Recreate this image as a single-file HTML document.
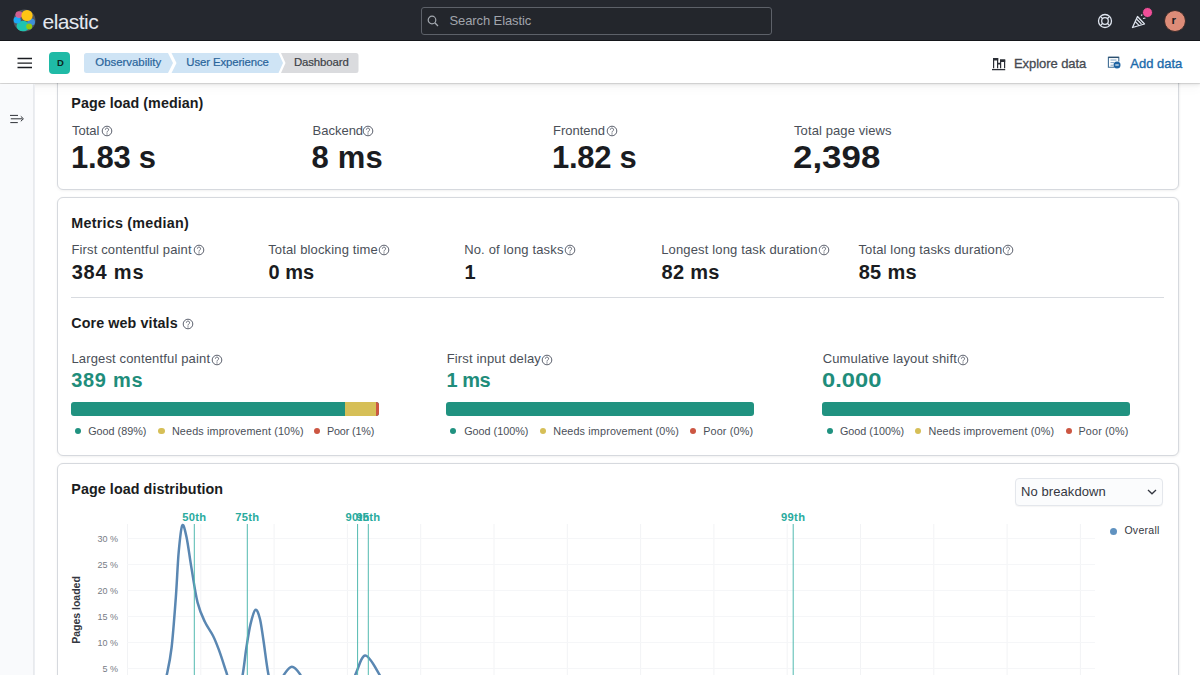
<!DOCTYPE html>
<html><head><meta charset="utf-8">
<style>
*{box-sizing:border-box;margin:0;padding:0}
html,body{width:1200px;height:675px;overflow:hidden;background:#fff;font-family:"Liberation Sans",sans-serif;color:#343741}
.a{position:absolute;white-space:nowrap;line-height:1}
</style></head><body>

<div class="a" style="left:57px;top:30px;width:1122px;height:160px;border:1px solid #d6d9de;border-radius:6px;background:#fff;box-shadow:0 1px 3px rgba(0,0,0,.05),1px 0 2px rgba(0,0,0,.03)"></div>
<div class="a" style="left:57px;top:197px;width:1122px;height:259px;border:1px solid #d6d9de;border-radius:6px;background:#fff;box-shadow:0 1px 3px rgba(0,0,0,.05),1px 0 2px rgba(0,0,0,.03)"></div>
<div class="a" style="left:57px;top:463px;width:1122px;height:300px;border:1px solid #d6d9de;border-radius:6px;background:#fff;box-shadow:0 1px 3px rgba(0,0,0,.05),1px 0 2px rgba(0,0,0,.03)"></div>
<div class="a" style="left:71.3px;top:96.30px;font-size:14.3px;font-weight:700;color:#1a1c21;letter-spacing:0.05px">Page load (median)</div>
<div class="a" style="left:72px;top:124.10px;font-size:13px;font-weight:400;color:#4a4f58">Total</div>
<div class="a" style="left:71.1px;top:141.56px;font-size:31px;font-weight:700;color:#1a1c21;letter-spacing:-0.25px">1.83 s</div>
<svg class="a" style="left:101.1px;top:125.4px" width="12" height="12" viewBox="0 0 12 12"><circle cx="6" cy="6" r="4.8" fill="none" stroke="#535966" stroke-width="0.95"/><path d="M4.4 4.7a1.6 1.6 0 1 1 2.3 1.4c-.5.3-.7.6-.7 1.1v.4" fill="none" stroke="#535966" stroke-width="0.85"/><circle cx="6" cy="8.9" r=".55" fill="#535966"/></svg>
<div class="a" style="left:312.5px;top:124.10px;font-size:13px;font-weight:400;color:#4a4f58">Backend</div>
<div class="a" style="left:311.6px;top:141.56px;font-size:31px;font-weight:700;color:#1a1c21;letter-spacing:0.2px">8 ms</div>
<svg class="a" style="left:362.2px;top:125.4px" width="12" height="12" viewBox="0 0 12 12"><circle cx="6" cy="6" r="4.8" fill="none" stroke="#535966" stroke-width="0.95"/><path d="M4.4 4.7a1.6 1.6 0 1 1 2.3 1.4c-.5.3-.7.6-.7 1.1v.4" fill="none" stroke="#535966" stroke-width="0.85"/><circle cx="6" cy="8.9" r=".55" fill="#535966"/></svg>
<div class="a" style="left:553px;top:124.10px;font-size:13px;font-weight:400;color:#4a4f58">Frontend</div>
<div class="a" style="left:552.1px;top:141.56px;font-size:31px;font-weight:700;color:#1a1c21;letter-spacing:-0.3px">1.82 s</div>
<svg class="a" style="left:605.8px;top:125.4px" width="12" height="12" viewBox="0 0 12 12"><circle cx="6" cy="6" r="4.8" fill="none" stroke="#535966" stroke-width="0.95"/><path d="M4.4 4.7a1.6 1.6 0 1 1 2.3 1.4c-.5.3-.7.6-.7 1.1v.4" fill="none" stroke="#535966" stroke-width="0.85"/><circle cx="6" cy="8.9" r=".55" fill="#535966"/></svg>
<div class="a" style="left:794px;top:124.10px;font-size:13px;font-weight:400;color:#4a4f58;letter-spacing:0.1px">Total page views</div>
<div class="a" style="left:793.1px;top:141.56px;font-size:31px;font-weight:700;color:#1a1c21;transform:scaleX(1.125);transform-origin:0 0">2,398</div>
<div class="a" style="left:71.3px;top:215.90px;font-size:14.3px;font-weight:700;color:#1a1c21;letter-spacing:0.25px">Metrics (median)</div>
<div class="a" style="left:71.4px;top:243.30px;font-size:13px;font-weight:400;color:#4a4f58;letter-spacing:0.15px">First contentful paint</div>
<div class="a" style="left:71.7px;top:261.87px;font-size:20px;font-weight:700;color:#1a1c21;letter-spacing:0.8px">384 ms</div>
<svg class="a" style="left:192.6px;top:244.4px" width="12" height="12" viewBox="0 0 12 12"><circle cx="6" cy="6" r="4.8" fill="none" stroke="#535966" stroke-width="0.95"/><path d="M4.4 4.7a1.6 1.6 0 1 1 2.3 1.4c-.5.3-.7.6-.7 1.1v.4" fill="none" stroke="#535966" stroke-width="0.85"/><circle cx="6" cy="8.9" r=".55" fill="#535966"/></svg>
<div class="a" style="left:268.2px;top:243.30px;font-size:13px;font-weight:400;color:#4a4f58;letter-spacing:0.15px">Total blocking time</div>
<div class="a" style="left:268.5px;top:261.87px;font-size:20px;font-weight:700;color:#1a1c21">0 ms</div>
<svg class="a" style="left:378.3px;top:244.4px" width="12" height="12" viewBox="0 0 12 12"><circle cx="6" cy="6" r="4.8" fill="none" stroke="#535966" stroke-width="0.95"/><path d="M4.4 4.7a1.6 1.6 0 1 1 2.3 1.4c-.5.3-.7.6-.7 1.1v.4" fill="none" stroke="#535966" stroke-width="0.85"/><circle cx="6" cy="8.9" r=".55" fill="#535966"/></svg>
<div class="a" style="left:464.2px;top:243.30px;font-size:13px;font-weight:400;color:#4a4f58;letter-spacing:0.15px">No. of long tasks</div>
<div class="a" style="left:464.5px;top:261.87px;font-size:20px;font-weight:700;color:#1a1c21">1</div>
<svg class="a" style="left:563.8px;top:244.4px" width="12" height="12" viewBox="0 0 12 12"><circle cx="6" cy="6" r="4.8" fill="none" stroke="#535966" stroke-width="0.95"/><path d="M4.4 4.7a1.6 1.6 0 1 1 2.3 1.4c-.5.3-.7.6-.7 1.1v.4" fill="none" stroke="#535966" stroke-width="0.85"/><circle cx="6" cy="8.9" r=".55" fill="#535966"/></svg>
<div class="a" style="left:661.1999999999999px;top:243.30px;font-size:13px;font-weight:400;color:#4a4f58;letter-spacing:0.15px">Longest long task duration</div>
<div class="a" style="left:661.5px;top:261.87px;font-size:20px;font-weight:700;color:#1a1c21;letter-spacing:0.3px">82 ms</div>
<svg class="a" style="left:817.7px;top:244.4px" width="12" height="12" viewBox="0 0 12 12"><circle cx="6" cy="6" r="4.8" fill="none" stroke="#535966" stroke-width="0.95"/><path d="M4.4 4.7a1.6 1.6 0 1 1 2.3 1.4c-.5.3-.7.6-.7 1.1v.4" fill="none" stroke="#535966" stroke-width="0.85"/><circle cx="6" cy="8.9" r=".55" fill="#535966"/></svg>
<div class="a" style="left:858.4px;top:243.30px;font-size:13px;font-weight:400;color:#4a4f58;letter-spacing:0.15px">Total long tasks duration</div>
<div class="a" style="left:858.7px;top:261.87px;font-size:20px;font-weight:700;color:#1a1c21;letter-spacing:0.3px">85 ms</div>
<svg class="a" style="left:1002.3px;top:244.4px" width="12" height="12" viewBox="0 0 12 12"><circle cx="6" cy="6" r="4.8" fill="none" stroke="#535966" stroke-width="0.95"/><path d="M4.4 4.7a1.6 1.6 0 1 1 2.3 1.4c-.5.3-.7.6-.7 1.1v.4" fill="none" stroke="#535966" stroke-width="0.85"/><circle cx="6" cy="8.9" r=".55" fill="#535966"/></svg>
<div class="a" style="left:71px;top:297px;width:1093px;height:1px;background:#d8dbe0"></div>
<div class="a" style="left:71.3px;top:315.50px;font-size:14.3px;font-weight:700;color:#1a1c21;letter-spacing:0.1px">Core web vitals</div>
<svg class="a" style="left:181.6px;top:318.0px" width="12" height="12" viewBox="0 0 12 12"><circle cx="6" cy="6" r="4.8" fill="none" stroke="#535966" stroke-width="0.95"/><path d="M4.4 4.7a1.6 1.6 0 1 1 2.3 1.4c-.5.3-.7.6-.7 1.1v.4" fill="none" stroke="#535966" stroke-width="0.85"/><circle cx="6" cy="8.9" r=".55" fill="#535966"/></svg>
<div class="a" style="left:71.4px;top:352.00px;font-size:13px;font-weight:400;color:#4a4f58;letter-spacing:0.15px">Largest contentful paint</div>
<svg class="a" style="left:210.8px;top:354.0px" width="12" height="12" viewBox="0 0 12 12"><circle cx="6" cy="6" r="4.8" fill="none" stroke="#535966" stroke-width="0.95"/><path d="M4.4 4.7a1.6 1.6 0 1 1 2.3 1.4c-.5.3-.7.6-.7 1.1v.4" fill="none" stroke="#535966" stroke-width="0.85"/><circle cx="6" cy="8.9" r=".55" fill="#535966"/></svg>
<div class="a" style="left:71.2px;top:370.07px;font-size:20px;font-weight:700;color:#1f8d7b;letter-spacing:0.7px">389 ms</div>
<div class="a" style="left:71px;top:402px;width:307.5px;height:14px;border-radius:3px;overflow:hidden;background:#209280"><div class="a" style="left:274px;top:0;width:31px;height:14px;background:#d6bf57"></div><div class="a" style="left:305px;top:0;width:3px;height:14px;background:#cc5642"></div></div>
<div class="a" style="left:74.8px;top:427.8px;width:6.4px;height:6.4px;border-radius:50%;background:#209280"></div>
<div class="a" style="left:88.2px;top:425.76px;font-size:10.8px;font-weight:400;color:#4a4f58">Good (89%)</div>
<div class="a" style="left:158.3px;top:427.8px;width:6.4px;height:6.4px;border-radius:50%;background:#d6bf57"></div>
<div class="a" style="left:171.89999999999998px;top:425.76px;font-size:10.8px;font-weight:400;color:#4a4f58;letter-spacing:0.15px">Needs improvement (10%)</div>
<div class="a" style="left:313.5px;top:427.8px;width:6.4px;height:6.4px;border-radius:50%;background:#cc5642"></div>
<div class="a" style="left:326.9px;top:425.76px;font-size:10.8px;font-weight:400;color:#4a4f58;letter-spacing:-0.15px">Poor (1%)</div>
<div class="a" style="left:446.7px;top:352.00px;font-size:13px;font-weight:400;color:#4a4f58;letter-spacing:0.15px">First input delay</div>
<svg class="a" style="left:541.2px;top:354.0px" width="12" height="12" viewBox="0 0 12 12"><circle cx="6" cy="6" r="4.8" fill="none" stroke="#535966" stroke-width="0.95"/><path d="M4.4 4.7a1.6 1.6 0 1 1 2.3 1.4c-.5.3-.7.6-.7 1.1v.4" fill="none" stroke="#535966" stroke-width="0.85"/><circle cx="6" cy="8.9" r=".55" fill="#535966"/></svg>
<div class="a" style="left:446.5px;top:370.07px;font-size:20px;font-weight:700;color:#1f8d7b;letter-spacing:-0.5px">1 ms</div>
<div class="a" style="left:446.3px;top:402px;width:307.5px;height:14px;border-radius:3px;background:#209280"></div>
<div class="a" style="left:450.1px;top:427.8px;width:6.4px;height:6.4px;border-radius:50%;background:#209280"></div>
<div class="a" style="left:464.2px;top:425.76px;font-size:10.8px;font-weight:400;color:#4a4f58">Good (100%)</div>
<div class="a" style="left:539.5px;top:427.8px;width:6.4px;height:6.4px;border-radius:50%;background:#d6bf57"></div>
<div class="a" style="left:553.2px;top:425.76px;font-size:10.8px;font-weight:400;color:#4a4f58;letter-spacing:0.15px">Needs improvement (0%)</div>
<div class="a" style="left:690.0999999999999px;top:427.8px;width:6.4px;height:6.4px;border-radius:50%;background:#cc5642"></div>
<div class="a" style="left:703.2px;top:425.76px;font-size:10.8px;font-weight:400;color:#4a4f58;letter-spacing:0.15px">Poor (0%)</div>
<div class="a" style="left:822.6999999999999px;top:352.00px;font-size:13px;font-weight:400;color:#4a4f58;letter-spacing:0.15px">Cumulative layout shift</div>
<svg class="a" style="left:956.5px;top:354.0px" width="12" height="12" viewBox="0 0 12 12"><circle cx="6" cy="6" r="4.8" fill="none" stroke="#535966" stroke-width="0.95"/><path d="M4.4 4.7a1.6 1.6 0 1 1 2.3 1.4c-.5.3-.7.6-.7 1.1v.4" fill="none" stroke="#535966" stroke-width="0.85"/><circle cx="6" cy="8.9" r=".55" fill="#535966"/></svg>
<div class="a" style="left:822.4px;top:370.07px;font-size:20px;font-weight:700;color:#1f8d7b;transform:scaleX(1.185);transform-origin:0 0">0.000</div>
<div class="a" style="left:822.3px;top:402px;width:307.5px;height:14px;border-radius:3px;background:#209280"></div>
<div class="a" style="left:826.8px;top:427.8px;width:6.4px;height:6.4px;border-radius:50%;background:#209280"></div>
<div class="a" style="left:839.9000000000001px;top:425.76px;font-size:10.8px;font-weight:400;color:#4a4f58">Good (100%)</div>
<div class="a" style="left:915.0999999999999px;top:427.8px;width:6.4px;height:6.4px;border-radius:50%;background:#d6bf57"></div>
<div class="a" style="left:928.5px;top:425.76px;font-size:10.8px;font-weight:400;color:#4a4f58;letter-spacing:0.15px">Needs improvement (0%)</div>
<div class="a" style="left:1066.1px;top:427.8px;width:6.4px;height:6.4px;border-radius:50%;background:#cc5642"></div>
<div class="a" style="left:1078.5px;top:425.76px;font-size:10.8px;font-weight:400;color:#4a4f58;letter-spacing:0.15px">Poor (0%)</div>
<div class="a" style="left:71.3px;top:481.50px;font-size:14.3px;font-weight:700;color:#1a1c21;letter-spacing:0.08px">Page load distribution</div>
<div class="a" style="left:1015px;top:478px;width:148px;height:28px;border:1px solid #e4e7ec;border-radius:4px;background:#fbfcfd;box-shadow:0 1px 1px rgba(0,0,0,.04)"></div>
<div class="a" style="left:1020.9px;top:485.00px;font-size:13px;font-weight:400;color:#343741;letter-spacing:0.1px">No breakdown</div>
<svg class="a" style="left:1146px;top:487px" width="12" height="10" viewBox="0 0 12 10"><path d="M2 3l4 3.8L10 3" fill="none" stroke="#343741" stroke-width="1.3"/></svg>
<div class="a" style="left:1110.3px;top:528px;width:7px;height:7px;border-radius:50%;background:#6092c0"></div>
<div class="a" style="left:1124.4px;top:525.11px;font-size:10.5px;font-weight:400;color:#343741;letter-spacing:0.3px">Overall</div>
<svg class="a" style="left:0;top:0" width="1200" height="675" viewBox="0 0 1200 675">
<line x1="127.5" y1="524" x2="127.5" y2="675" stroke="#f2f3f5" stroke-width="1"/>
<line x1="200.8" y1="524" x2="200.8" y2="675" stroke="#f2f3f5" stroke-width="1"/>
<line x1="274.1" y1="524" x2="274.1" y2="675" stroke="#f2f3f5" stroke-width="1"/>
<line x1="347.4" y1="524" x2="347.4" y2="675" stroke="#f2f3f5" stroke-width="1"/>
<line x1="420.7" y1="524" x2="420.7" y2="675" stroke="#f2f3f5" stroke-width="1"/>
<line x1="494.0" y1="524" x2="494.0" y2="675" stroke="#f2f3f5" stroke-width="1"/>
<line x1="567.3" y1="524" x2="567.3" y2="675" stroke="#f2f3f5" stroke-width="1"/>
<line x1="640.6" y1="524" x2="640.6" y2="675" stroke="#f2f3f5" stroke-width="1"/>
<line x1="713.9" y1="524" x2="713.9" y2="675" stroke="#f2f3f5" stroke-width="1"/>
<line x1="787.2" y1="524" x2="787.2" y2="675" stroke="#f2f3f5" stroke-width="1"/>
<line x1="860.5" y1="524" x2="860.5" y2="675" stroke="#f2f3f5" stroke-width="1"/>
<line x1="933.8" y1="524" x2="933.8" y2="675" stroke="#f2f3f5" stroke-width="1"/>
<line x1="1007.1" y1="524" x2="1007.1" y2="675" stroke="#f2f3f5" stroke-width="1"/>
<line x1="1080.4" y1="524" x2="1080.4" y2="675" stroke="#f2f3f5" stroke-width="1"/>
<line x1="127" y1="538.5" x2="1095" y2="538.5" stroke="#f5f6f8" stroke-width="1"/>
<line x1="127" y1="564.5" x2="1095" y2="564.5" stroke="#f5f6f8" stroke-width="1"/>
<line x1="127" y1="590.5" x2="1095" y2="590.5" stroke="#f5f6f8" stroke-width="1"/>
<line x1="127" y1="616.5" x2="1095" y2="616.5" stroke="#f5f6f8" stroke-width="1"/>
<line x1="127" y1="642.5" x2="1095" y2="642.5" stroke="#f5f6f8" stroke-width="1"/>
<line x1="127" y1="668.5" x2="1095" y2="668.5" stroke="#f5f6f8" stroke-width="1"/>
<text x="118" y="541.7" text-anchor="end" font-family="Liberation Sans" font-size="9" fill="#777c85">30 %</text>
<text x="118" y="567.7" text-anchor="end" font-family="Liberation Sans" font-size="9" fill="#777c85">25 %</text>
<text x="118" y="593.7" text-anchor="end" font-family="Liberation Sans" font-size="9" fill="#777c85">20 %</text>
<text x="118" y="619.7" text-anchor="end" font-family="Liberation Sans" font-size="9" fill="#777c85">15 %</text>
<text x="118" y="645.7" text-anchor="end" font-family="Liberation Sans" font-size="9" fill="#777c85">10 %</text>
<text x="118" y="671.7" text-anchor="end" font-family="Liberation Sans" font-size="9" fill="#777c85">5 %</text>
<text transform="translate(80 610) rotate(-90)" text-anchor="middle" font-family="Liberation Sans" font-size="10.5" font-weight="700" fill="#343741">Pages loaded</text>
<path d="M150.0 694.7 C152.0 694.2 159.2 695.3 162.0 692.0 C164.8 688.7 165.2 682.2 166.8 674.8 C168.4 667.4 170.1 660.3 171.6 647.5 C173.1 634.7 174.6 613.7 175.8 597.8 C177.0 581.9 177.6 564.0 178.7 552.0 C179.8 540.0 180.9 528.0 182.2 525.5 C183.5 523.0 184.9 529.7 186.5 537.0 C188.1 544.3 189.8 558.5 191.7 569.4 C193.5 580.3 195.4 593.9 197.6 602.6 C199.8 611.3 202.1 616.0 204.7 621.5 C207.3 627.0 210.6 631.0 213.0 635.7 C215.4 640.4 216.7 644.0 218.9 649.9 C221.1 655.8 223.8 664.5 226.0 671.2 C228.2 677.9 230.0 686.5 232.0 690.0 C234.0 693.5 236.2 694.6 238.0 692.0 C239.8 689.4 241.3 681.7 242.7 674.4 C244.1 667.1 245.0 656.6 246.3 648.3 C247.6 640.0 248.9 631.0 250.4 624.6 C251.9 618.2 253.8 610.8 255.4 609.8 C257.0 608.8 258.6 613.7 259.9 618.7 C261.2 623.7 262.0 630.9 263.4 640.0 C264.8 649.1 266.6 664.9 268.2 673.2 C269.8 681.5 271.4 687.5 273.0 690.0 C274.6 692.5 276.1 690.6 278.0 688.0 C279.9 685.4 281.9 677.9 284.2 674.4 C286.5 670.9 289.2 666.7 291.9 666.7 C294.6 666.7 297.8 670.9 300.2 674.4 C302.6 677.9 298.0 685.4 306.0 688.0 C314.0 690.6 339.8 692.2 348.0 690.0 C356.2 687.8 352.3 680.7 355.2 675.0 C358.1 669.3 361.2 655.8 365.2 655.6 C369.2 655.4 375.5 668.1 379.0 673.8 C382.5 679.5 382.5 686.5 386.0 690.0 C389.5 693.5 397.7 693.9 400.0 694.7" fill="none" stroke="#5a87b2" stroke-width="2.5" stroke-linejoin="round"/>
<line x1="194.3" y1="524" x2="194.3" y2="675" stroke="#52bab0" stroke-width="1"/>
<text x="194.3" y="521.4" text-anchor="middle" font-family="Liberation Sans" font-size="11.2" font-weight="700" letter-spacing="0.3" fill="#2aab9e">50th</text>
<line x1="247.3" y1="524" x2="247.3" y2="675" stroke="#52bab0" stroke-width="1"/>
<text x="247.3" y="521.4" text-anchor="middle" font-family="Liberation Sans" font-size="11.2" font-weight="700" letter-spacing="0.3" fill="#2aab9e">75th</text>
<line x1="357.6" y1="524" x2="357.6" y2="675" stroke="#52bab0" stroke-width="1"/>
<text x="357.6" y="521.4" text-anchor="middle" font-family="Liberation Sans" font-size="11.2" font-weight="700" letter-spacing="0.3" fill="#2aab9e">90th</text>
<line x1="368.3" y1="524" x2="368.3" y2="675" stroke="#52bab0" stroke-width="1"/>
<text x="368.3" y="521.4" text-anchor="middle" font-family="Liberation Sans" font-size="11.2" font-weight="700" letter-spacing="0.3" fill="#2aab9e">95th</text>
<line x1="793.2" y1="524" x2="793.2" y2="675" stroke="#52bab0" stroke-width="1"/>
<text x="793.2" y="521.4" text-anchor="middle" font-family="Liberation Sans" font-size="11.2" font-weight="700" letter-spacing="0.3" fill="#2aab9e">99th</text>
</svg>
<div class="a" style="left:0px;top:0px;width:1200px;height:41px;background:#25282f;border-bottom:1px solid #14161a"></div>
<svg class="a" style="left:13px;top:9px" width="23" height="23" viewBox="0 0 23 23">
<circle cx="11.5" cy="11.5" r="11" fill="#dfe5ef" opacity=".25"/>
<ellipse cx="10" cy="17" rx="6.5" ry="5.3" fill="#1ec4b0"/>
<ellipse cx="4.2" cy="11" rx="3.6" ry="3.6" fill="#1ba9f5"/>
<ellipse cx="6" cy="5.6" rx="3.6" ry="3.4" fill="#e6609a" opacity=".85"/>
<ellipse cx="18.2" cy="13" rx="3.8" ry="3.6" fill="#3d8fd8"/>
<circle cx="16.2" cy="17.6" r="3" fill="#93c90e"/>
<circle cx="14" cy="6.5" r="5.6" fill="#fec514"/>
</svg>
<div class="a" style="left:42.5px;top:10.72px;font-size:21px;font-weight:400;color:#e4e8ef;letter-spacing:-0.55px">elastic</div>
<div class="a" style="left:421px;top:7px;width:351px;height:28px;border:1px solid #5d6169;border-radius:3px;background:#23262c"></div>
<svg class="a" style="left:427px;top:15px" width="12" height="12" viewBox="0 0 12 12"><circle cx="5" cy="5" r="3.8" fill="none" stroke="#a4a9b0" stroke-width="1.2"/><path d="M7.8 7.8L11 11" stroke="#a4a9b0" stroke-width="1.3"/></svg>
<div class="a" style="left:449.5px;top:14.10px;font-size:13px;font-weight:400;color:#a0a4ab;letter-spacing:-0.1px">Search Elastic</div>
<svg class="a" style="left:1097px;top:13px" width="16" height="16" viewBox="0 0 16 16"><circle cx="8" cy="8" r="6.5" fill="none" stroke="#dfe5ef" stroke-width="1.3"/><circle cx="8" cy="8" r="3.3" fill="none" stroke="#dfe5ef" stroke-width="1.3"/><path d="M3.4 3.4l2.3 2.3M12.6 3.4L10.3 5.7M3.4 12.6l2.3-2.3M12.6 12.6l-2.3-2.3" stroke="#dfe5ef" stroke-width="1.3"/></svg>
<svg class="a" style="left:1131px;top:12px" width="18" height="18" viewBox="0 0 18 18"><path d="M1.5 15.5L6.5 4.5l7 7.5z" fill="none" stroke="#dfe5ef" stroke-width="1.3" stroke-linejoin="round"/><path d="M4.2 9.5l4.3 4.3M5.5 7l5 5" stroke="#dfe5ef" stroke-width="1.1"/><path d="M10 3.5l1.5-1M12 6.5l2.5-.5" stroke="#dfe5ef" stroke-width="1.1"/></svg>
<div class="a" style="left:1142px;top:7px;width:11px;height:11px;border-radius:50%;background:#f04e98;border:1.5px solid #25282f"></div>
<div class="a" style="left:1164px;top:9.5px;width:22px;height:22px;border-radius:50%;background:#dd8c78;border:1px solid #3a2a28"></div>
<div class="a" style="left:1171.6px;top:15.27px;font-size:11.5px;font-weight:700;color:#1a1c21">r</div>
<div class="a" style="left:0px;top:41px;width:1200px;height:42px;background:#fff;box-shadow:0 1px 1px rgba(0,0,0,.12),0 3px 3px rgba(0,0,0,.05),0 7px 10px rgba(0,0,0,.025)"></div>
<svg class="a" style="left:17px;top:57px" width="16" height="12" viewBox="0 0 16 12"><path d="M0.5 1.5h14.5M0.5 6.1h14.5M0.5 10.5h14.5" stroke="#1a1c21" stroke-width="1.35"/></svg>
<div class="a" style="left:49px;top:52.4px;width:21px;height:21.2px;border-radius:4px;background:#1fbaa6"></div>
<div class="a" style="left:57.1px;top:58.26px;font-size:9.5px;font-weight:700;color:#0b2420">D</div>
<svg class="a" style="left:84px;top:53px" width="276" height="20" viewBox="0 0 276 20">
<path d="M2.5 0H84l5 10-5 10H2.5A2.5 2.5 0 0 1 0 17.5V2.5A2.5 2.5 0 0 1 2.5 0z" fill="#cfe4f5"/>
<path d="M87.5 0H194.5l4.5 10-4.5 10H87.5l5-10z" fill="#cfe4f5"/>
<path d="M197 0H272a2.5 2.5 0 0 1 2.5 2.5V17.5a2.5 2.5 0 0 1-2.5 2.5H197l4.5-10z" fill="#dadbde"/>
</svg>
<div class="a" style="left:95.3px;top:57.15px;font-size:11.4px;font-weight:400;color:#2a659b;-webkit-text-stroke:0.2px #2a659b">Observability</div>
<div class="a" style="left:186.3px;top:57.15px;font-size:11.4px;font-weight:400;color:#2a659b;letter-spacing:-0.12px;-webkit-text-stroke:0.2px #2a659b">User Experience</div>
<div class="a" style="left:293.9px;top:57.15px;font-size:11.4px;font-weight:400;color:#3c3f46;letter-spacing:-0.1px;-webkit-text-stroke:0.2px #3c3f46">Dashboard</div>
<svg class="a" style="left:990px;top:55px" width="18" height="17" viewBox="990 55 18 17"><path d="M993.6 68.2V58.6h4v9.6M1000.6 68.2V60.2h4v8" fill="none" stroke="#2b2e35" stroke-width="1.2"/><path d="M993 58h5.2v2.6H993zM1000 59.6h5.2v2.4H1000zM997.6 62.8h3v1.6h-3z" fill="#2b2e35"/><path d="M992 69.6h13.2" stroke="#2b2e35" stroke-width="1.3"/></svg>
<div class="a" style="left:1013.9px;top:56.50px;font-size:13px;font-weight:400;color:#464a52;letter-spacing:-0.05px;-webkit-text-stroke:0.3px #464a52">Explore data</div>
<svg class="a" style="left:1105px;top:54px" width="20" height="18" viewBox="1105 54 20 18"><path d="M1114 67.2h-5.6V57.4h10.4v4" fill="none" stroke="#3f6d94" stroke-width="1.1"/><path d="M1108.4 57.4h10.4" stroke="#2d4f6e" stroke-width="1.3"/><path d="M1110.5 60h6M1110.5 62.6h3.5M1110.5 65.2h2.5" stroke="#7fa3c4" stroke-width="1"/><circle cx="1117" cy="65" r="3.5" fill="#1f64a3"/><path d="M1115.3 65h3.4" stroke="#fff" stroke-width="1.1"/></svg>
<div class="a" style="left:1130.3px;top:56.50px;font-size:13px;font-weight:400;color:#1a6aab;-webkit-text-stroke:0.35px #1a6aab">Add data</div>
<div class="a" style="left:0px;top:84px;width:34px;height:591px;background:#f9fafc;border-right:1px solid #e8eaed"></div>
<div class="a" style="left:34px;top:84px;width:1px;height:591px;background:#eceef2"></div>
<svg class="a" style="left:8px;top:112px" width="18" height="13" viewBox="8 112 18 13"><path d="M10 115.4h8M10.8 118.8h11.5M10.3 122.6h7.5" stroke="#2f3238" stroke-width="1"/><path d="M20.8 116.3l2.6 2.5-2.6 2.5" fill="none" stroke="#2f3238" stroke-width="1"/></svg>
</body></html>
